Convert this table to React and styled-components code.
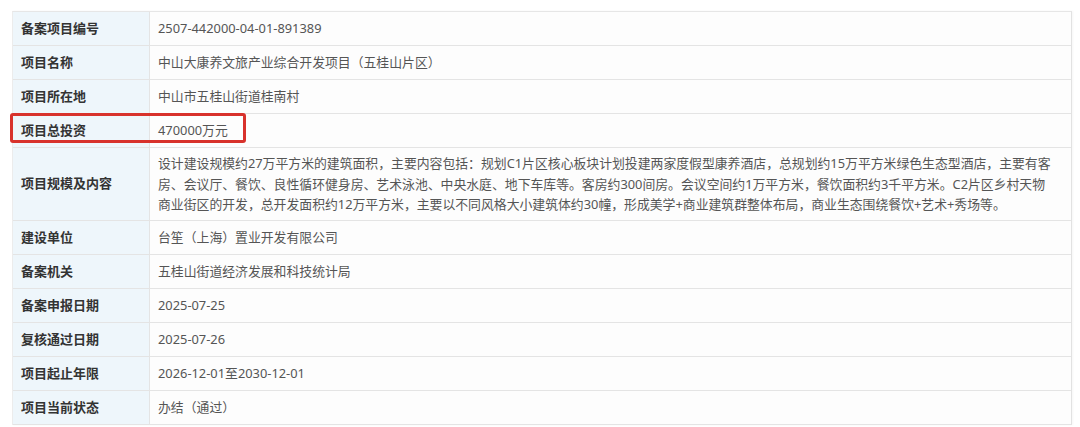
import React from 'react'
import styled, { createGlobalStyle } from 'styled-components'

const GlobalStyle = createGlobalStyle`
  html, body {
    margin: 0;
    padding: 0;
    background: #ffffff;
  }
  body {
    font-family: "Noto Sans", "Noto Sans CJK SC", sans-serif;
    -webkit-font-smoothing: antialiased;
  }
`

const rows = [
  { label: '备案项目编号', value: '2507-442000-04-01-891389' },
  { label: '项目名称', value: '中山大康养文旅产业综合开发项目（五桂山片区）' },
  { label: '项目所在地', value: '中山市五桂山街道桂南村' },
  { label: '项目总投资', value: '470000万元', marked: true },
  {
    label: '项目规模及内容',
    lines: [
      '设计建设规模约27万平方米的建筑面积，主要内容包括：规划C1片区核心板块计划投建两家度假型康养酒店，总规划约15万平方米绿色生态型酒店，主要有客',
      '房、会议厅、餐饮、良性循环健身房、艺术泳池、中央水庭、地下车库等。客房约300间房。会议空间约1万平方米，餐饮面积约3千平方米。C2片区乡村天物',
      '商业街区的开发，总开发面积约12万平方米，主要以不同风格大小建筑体约30幢，形成美学+商业建筑群整体布局，商业生态围绕餐饮+艺术+秀场等。',
    ],
  },
  { label: '建设单位', value: '台笙（上海）置业开发有限公司' },
  { label: '备案机关', value: '五桂山街道经济发展和科技统计局' },
  { label: '备案申报日期', value: '2025-07-25' },
  { label: '复核通过日期', value: '2025-07-26' },
  { label: '项目起止年限', value: '2026-12-01至2030-12-01' },
  { label: '项目当前状态', value: '办结（通过）' },
]

export default function App() {
  return (
    <>
      <GlobalStyle />
      <Page>
        <Table>
          {rows.map((row) => (
            <Row key={row.label}>
              <Label>{row.label}</Label>
              <Value $multi={!!row.lines}>
                {row.lines
                  ? row.lines.map((l) => <Line key={l}>{l}</Line>)
                  : row.value}
              </Value>
              {row.marked && <Mark />}
            </Row>
          ))}
        </Table>
      </Page>
    </>
  )
}

const Page = styled.div`
  padding: 11px 10px 0 12px;
  width: 1080px;
  height: 427px;
  box-sizing: border-box;
  overflow: hidden;
`

const Table = styled.div`
  width: 1058px;
  border-top: 1px solid #e6e6e6;
  border-left: 1px solid #ececec;
  border-right: 1px solid #e2e2e2;
  box-shadow: 1px 0 2px rgba(0, 0, 0, 0.04);
`

const Row = styled.div`
  position: relative;
  display: grid;
  grid-template-columns: 137px 1fr;
  border-bottom: 1px solid #e4e4e4;
`

const Label = styled.div`
  display: flex;
  align-items: center;
  padding: 0 8px 1px;
  min-height: 32px;
  background: #eef6fb;
  border-right: 1px solid #e4e4e4;
  color: #333333;
  font-size: 13px;
  line-height: 20px;
  font-weight: 700;
`

const Value = styled.div`
  display: flex;
  flex-direction: column;
  justify-content: center;
  padding: ${(p) => (p.$multi ? '5px 8px' : '0 8px')};
  min-height: 33px;
  background: #fdfdfd;
  color: #555555;
  font-size: 12.85px;
  line-height: 20.5px;
`

const Line = styled.div`
  white-space: nowrap;
`

const Mark = styled.div`
  position: absolute;
  left: -3px;
  top: -1px;
  width: 236px;
  height: 30px;
  box-sizing: border-box;
  border: 3px solid #d8322c;
  border-radius: 3px;
  pointer-events: none;
`
